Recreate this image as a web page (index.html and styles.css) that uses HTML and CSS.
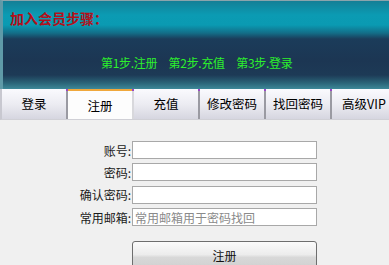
FILE: index.html
```html
<!DOCTYPE html>
<html lang="zh">
<head>
<meta charset="utf-8">
<title>注册</title>
<link rel="stylesheet" href="styles.css">
</head>
<body>
<div class="page">
  <header class="banner">
    <h1 class="banner-title">加入会员步骤：</h1>
    <div class="steps">
      <span class="step">第1步.注册</span>
      <span class="step">第2步.充值</span>
      <span class="step">第3步.登录</span>
    </div>
  </header>
  <nav class="tabs">
    <a class="tab">登录</a>
    <a class="tab active">注册</a>
    <a class="tab">充值</a>
    <a class="tab">修改密码</a>
    <a class="tab">找回密码</a>
    <a class="tab">高级VIP</a>
  </nav>
  <main class="panel">
    <form class="form">
      <div class="row"><label class="label">账号:</label><input class="field" type="text"></div>
      <div class="row"><label class="label">密码:</label><input class="field" type="password"></div>
      <div class="row"><label class="label">确认密码:</label><input class="field" type="password"></div>
      <div class="row"><label class="label">常用邮箱:</label><input class="field" type="text" placeholder="常用邮箱用于密码找回"></div>
      <div class="row actions"><span class="label"></span><button class="submit" type="button">注册</button></div>
    </form>
  </main>
</div>
</body>
</html>
```
FILE: styles.css
```css
* { box-sizing: border-box; }
html, body {
  margin: 0;
  padding: 0;
  background: #f0f0f0;
  font-family: "Noto Sans CJK SC", "Noto Sans", sans-serif;
  font-size: 12px;
  color: #222;
}
.page {
  width: 389px;
  height: 265px;
  overflow: hidden;
}
.banner {
  height: 89px;
  border-top: 1px solid #8aa4ac;
  border-left: 3px solid #5f9aa8;
  background: linear-gradient(to bottom,
    #137f96 0px,
    #0b9bb3 14px,
    #0a9ab2 24px,
    #136e88 32px,
    #1b3c5a 38px,
    #1c3653 60px,
    #1d3a56 74px,
    #2a6478 82px,
    #3d8898 88px);
  padding: 8px 0 0 7px;
}
.banner-title {
  margin: 0;
  font-size: 14px;
  line-height: 18px;
  font-weight: bold;
  color: #b3101a;
}
.steps {
  margin-top: 29px;
  padding-left: 91px;
  font-size: 12px;
  line-height: 14px;
  color: #2cf02c;
  white-space: nowrap;
  letter-spacing: -0.3px;
}
.step { margin-right: 9px; }
.tabs {
  display: flex;
  height: 31px;
  border-left: 2px solid #c8c8d0;
  background: #e8e8ee;
  overflow: hidden;
  border-bottom: 1px solid #d0d0d6;
}
.tab {
  position: relative;
  flex: 0 0 66px;
  height: 30px;
  line-height: 29px;
  text-align: center;
  color: #000;
  font-size: 12.5px;
  background: linear-gradient(to bottom, #fafafe 0%, #ececf2 50%, #d6d6e0 100%);
  border-right: 2px solid #9a9aa2;
  white-space: nowrap;
}
.tab::before {
  content: "";
  position: absolute;
  top: 0;
  right: -2px;
  width: 2px;
  height: 2px;
  background: #9a44c8;
}
.tab.active {
  background: #fdfdfd;
  border-top: 2px solid #f0a83c;
  line-height: 30px;
  height: 31px;
  border-right-color: #d8d8dc;
}
.tab.active::before { top: -2px; }
.panel {
  padding: 21px 0 0 0;
}
.form {
  display: flex;
  flex-direction: column;
  gap: 4.4px;
}
.row {
  display: flex;
  align-items: center;
  height: 18px;
}
.label {
  width: 132px;
  flex: 0 0 132px;
  text-align: right;
  padding-right: 1px;
  color: #1a1a1a;
  font-size: 12px;
  white-space: nowrap;
}
.field {
  width: 185px;
  height: 18px;
  margin: 0;
  border: 1px solid #a8a8a8;
  background: #fff;
  padding: 0 2px;
  font-family: "Noto Sans CJK SC", "Noto Sans", sans-serif;
  font-size: 12px;
  outline: none;
}
.field::placeholder { color: #8a8a8a; }
.actions {
  margin-top: 10px;
  height: 30px;
  align-items: flex-start;
}
.submit {
  width: 185px;
  height: 30px;
  margin: 0;
  border: 1px solid #6e6e6e;
  border-radius: 3px;
  background: linear-gradient(to bottom, #fbfbfb 0%, #ececec 45%, #d8d8d8 55%, #cfcfcf 100%);
  font-family: "Noto Sans CJK SC", "Noto Sans", sans-serif;
  font-size: 12px;
  color: #111;
  padding: 0;
  line-height: 28px;
}
```
